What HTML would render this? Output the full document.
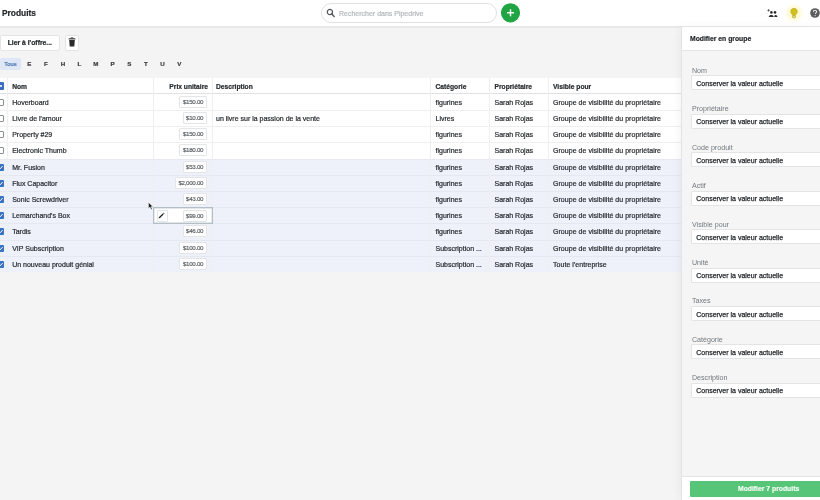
<!DOCTYPE html><html><head><meta charset="utf-8"><style>
*{box-sizing:border-box;margin:0;padding:0}
body{width:820px;height:500px;overflow:hidden;position:relative;background:#f4f4f4;font-family:"Liberation Sans",sans-serif;color:#26292c}
.a{position:absolute}
.t{position:absolute;white-space:nowrap;line-height:1;-webkit-text-stroke:.2px currentColor}
.row{position:absolute;left:0;width:681px}
.vl{position:absolute;top:78px;height:194px;width:1px;background:#eeeff0}
.cb{position:absolute;left:-3px;width:7px;height:7px;border-radius:1px}
.cb.off{border:1px solid #8a8f94;background:#fff}
.cb.on{background:#3b72c4}
.price{position:absolute;height:11.8px;border:1px solid #e3e5e7;background:#fff;border-radius:1px;font-size:6.2px;letter-spacing:-.3px;color:#55595d;text-align:right;padding-right:3.2px;line-height:9.9px;-webkit-text-stroke:.15px currentColor;white-space:nowrap}
.lbl{position:absolute;left:692px;font-size:7.1px;color:#73787d;white-space:nowrap;line-height:1}
.inp{position:absolute;left:691px;width:140px;height:15px;background:#fff;border:1px solid #e2e4e6;border-radius:1px}
.inp span{position:absolute;left:4.3px;top:3.6px;font-size:7px;color:#26292c;white-space:nowrap;line-height:1;-webkit-text-stroke:.25px currentColor}
</style></head><body><div id="root" style="position:absolute;left:0;top:0;width:820px;height:500px;will-change:transform;background:#f4f4f4">

<div class="a" style="left:0;top:0;width:820px;height:27px;background:#fff;border-bottom:1px solid #e8e8e8;box-shadow:0 1px 1px rgba(0,0,0,.04)"></div>
<div class="t" style="left:2px;top:9px;font-size:8.4px;font-weight:700;color:#26292c">Produits</div>
<div class="a" style="left:321px;top:3px;width:176px;height:19.5px;border:1px solid #dfe1e3;border-radius:10px;background:#fff"></div>
<svg class="a" style="left:326px;top:8px" width="10" height="10" viewBox="0 0 10 10"><circle cx="3.9" cy="4" r="2.6" fill="none" stroke="#505558" stroke-width="1.2"/><line x1="5.8" y1="6" x2="8.2" y2="8.4" stroke="#505558" stroke-width="1.4" stroke-linecap="round"/></svg>
<div class="t" style="left:339px;top:9.5px;font-size:7px;color:#b4b7ba">Rechercher dans Pipedrive</div>
<svg class="a" style="left:500px;top:3px" width="21" height="20" viewBox="0 0 21 20"><circle cx="10.5" cy="9.8" r="9.6" fill="#21a444"/><rect x="7" y="9.1" width="7" height="1.4" fill="#fff"/><rect x="9.8" y="6.3" width="1.4" height="7" fill="#fff"/></svg>

<svg class="a" style="left:766px;top:8px" width="14" height="10" viewBox="0 0 14 10"><path d="M2.6 1.2v2.4M1.4 2.4h2.4" stroke="#333" stroke-width=".7"/><circle cx="5.4" cy="4.4" r="1.3" fill="#2e2e2e"/><circle cx="9" cy="4.4" r="1.3" fill="#2e2e2e"/><path d="M2.7 8.9c.3-1.5 1.3-2 2.6-2s2.1.5 2.5 2zM8.3 8.9c.1-1.1.5-1.9 1.1-1.9 1 0 1.8.6 2.1 1.9z" fill="#2e2e2e"/></svg>
<div class="a" style="left:784px;top:3px;width:20px;height:20px;border-radius:50%;background:radial-gradient(circle,rgba(255,240,120,.6) 0%,rgba(255,245,160,.35) 45%,rgba(255,255,255,0) 70%)"></div>
<svg class="a" style="left:789px;top:7px" width="10" height="12" viewBox="0 0 10 12"><path d="M5 1.3c-1.9 0-3.3 1.4-3.3 3.2 0 1.2.7 2 1.2 2.6.3.4.5.8.5 1.2h3.2c0-.4.2-.8.5-1.2.5-.6 1.2-1.4 1.2-2.6C8.3 2.7 6.9 1.3 5 1.3z" fill="#d2c01c" stroke="#b3a224" stroke-width=".5"/><rect x="3.5" y="8.6" width="3" height="2.2" rx=".8" fill="#e2d67a" stroke="#a99a2a" stroke-width=".6"/></svg>
<svg class="a" style="left:810px;top:8px" width="10" height="10" viewBox="0 0 10 10"><circle cx="5" cy="5" r="4.8" fill="#5c5c5c"/><path d="M3.4 3.9c0-1 .7-1.6 1.6-1.6s1.6.6 1.6 1.5c0 1-1.3 1.1-1.3 2.1" fill="none" stroke="#e6e6e6" stroke-width="1.1"/><circle cx="5.2" cy="7.6" r=".65" fill="#e6e6e6"/></svg>

<div class="a" style="left:0;top:34.5px;width:60px;height:16px;background:#fff;border:1px solid #e2e4e6;border-radius:2px"></div>
<div class="t" style="left:7.7px;top:39.5px;font-size:6.8px;font-weight:700;color:#26292c">Lier à l'offre...</div>
<div class="a" style="left:65px;top:34.5px;width:14px;height:16px;background:#fff;border:1px solid #e2e4e6;border-radius:2px"></div>
<svg class="a" style="left:68px;top:37px" width="8" height="10" viewBox="0 0 8 10"><rect x=".6" y="1.3" width="6.8" height="1.1" fill="#2b2b2b"/><rect x="2.8" y=".5" width="2.4" height="1" fill="#2b2b2b"/><path d="M1.2 2.9h5.6l-.5 6.5H1.7z" fill="#2b2b2b"/></svg>
<div class="a" style="left:0;top:58px;width:21px;height:11.5px;background:#dde7f5;border-radius:2px"></div>
<div class="t" style="left:4.2px;top:62.2px;font-size:5.9px;color:#4570ad">Tous</div>

<div class="t" style="left:24.3px;width:10px;text-align:center;top:61.2px;font-size:6.2px;font-weight:700;color:#3a3e42">E</div>
<div class="t" style="left:40.9px;width:10px;text-align:center;top:61.2px;font-size:6.2px;font-weight:700;color:#3a3e42">F</div>
<div class="t" style="left:57.9px;width:10px;text-align:center;top:61.2px;font-size:6.2px;font-weight:700;color:#3a3e42">H</div>
<div class="t" style="left:74.4px;width:10px;text-align:center;top:61.2px;font-size:6.2px;font-weight:700;color:#3a3e42">L</div>
<div class="t" style="left:90.8px;width:10px;text-align:center;top:61.2px;font-size:6.2px;font-weight:700;color:#3a3e42">M</div>
<div class="t" style="left:107.5px;width:10px;text-align:center;top:61.2px;font-size:6.2px;font-weight:700;color:#3a3e42">P</div>
<div class="t" style="left:124.30000000000001px;width:10px;text-align:center;top:61.2px;font-size:6.2px;font-weight:700;color:#3a3e42">S</div>
<div class="t" style="left:140.9px;width:10px;text-align:center;top:61.2px;font-size:6.2px;font-weight:700;color:#3a3e42">T</div>
<div class="t" style="left:157.4px;width:10px;text-align:center;top:61.2px;font-size:6.2px;font-weight:700;color:#3a3e42">U</div>
<div class="t" style="left:174.3px;width:10px;text-align:center;top:61.2px;font-size:6.2px;font-weight:700;color:#3a3e42">V</div>
<div class="a" style="left:0;top:78px;width:681px;height:16px;background:#fff;border-bottom:1px solid #dfe1e3"></div>
<div class="row" style="top:94.00px;height:16.00px;background:#fff;"></div>
<div class="row" style="top:110.00px;height:16.00px;background:#fff;border-top:1px solid #efefef;"></div>
<div class="row" style="top:126.00px;height:16.00px;background:#fff;border-top:1px solid #efefef;"></div>
<div class="row" style="top:142.00px;height:17.00px;background:#fff;border-top:1px solid #efefef;"></div>
<div class="row" style="top:159.00px;height:16.00px;background:#eef1fa;border-top:1px solid #e5e8ef;"></div>
<div class="row" style="top:175.00px;height:16.00px;background:#eef1fa;border-top:1px solid #e5e8ef;"></div>
<div class="row" style="top:191.00px;height:16.00px;background:#eef1fa;border-top:1px solid #e5e8ef;"></div>
<div class="row" style="top:207.00px;height:16.00px;background:#eef1fa;border-top:1px solid #e5e8ef;"></div>
<div class="row" style="top:223.00px;height:17.00px;background:#eef1fa;border-top:1px solid #e5e8ef;"></div>
<div class="row" style="top:240.00px;height:16.00px;background:#eef1fa;border-top:1px solid #e5e8ef;"></div>
<div class="row" style="top:256.00px;height:16.00px;background:#eef1fa;border-top:1px solid #e5e8ef;"></div>
<div class="vl" style="left:7px"></div>
<div class="vl" style="left:153px"></div>
<div class="vl" style="left:212px"></div>
<div class="vl" style="left:430px"></div>
<div class="vl" style="left:489px"></div>
<div class="vl" style="left:548px"></div>
<div class="cb on" style="top:82px;height:8px;background:#3d6dc2"><div class="a" style="left:1.2px;top:3px;width:4.3px;height:2px;background:#cfe0f7"></div></div>
<div class="t" style="left:12.2px;top:84.3px;font-size:6.7px;font-weight:700">Nom</div>
<div class="t" style="right:612px;top:84.3px;font-size:6.7px;font-weight:700">Prix unitaire</div>
<div class="t" style="left:216px;top:84.3px;font-size:6.7px;font-weight:700">Description</div>
<div class="t" style="left:435.5px;top:84.3px;font-size:6.7px;font-weight:700">Catégorie</div>
<div class="t" style="left:494.5px;top:84.3px;font-size:6.7px;font-weight:700">Propriétaire</div>
<div class="t" style="left:553px;top:84.3px;font-size:6.7px;font-weight:700">Visible pour</div>
<div class="cb off" style="top:99.00px"></div>
<div class="t" style="left:12.2px;top:98.90px;font-size:7px">Hoverboard</div>
<div class="price" style="left:179.4px;width:28px;top:96.40px">$150.00</div>
<div class="t" style="left:435.5px;top:98.90px;font-size:7px">figurines</div>
<div class="t" style="left:494.5px;top:98.90px;font-size:7px">Sarah Rojas</div>
<div class="t" style="left:553px;top:98.90px;font-size:7px;letter-spacing:.04px">Groupe de visibilité du propriétaire</div>
<div class="cb off" style="top:115.00px"></div>
<div class="t" style="left:12.2px;top:114.90px;font-size:7px">Livre de l'amour</div>
<div class="price" style="left:182.6px;width:24.8px;top:112.40px">$10.00</div>
<div class="t" style="left:216px;top:114.90px;font-size:7px">un livre sur la passion de la vente</div>
<div class="t" style="left:435.5px;top:114.90px;font-size:7px">Livres</div>
<div class="t" style="left:494.5px;top:114.90px;font-size:7px">Sarah Rojas</div>
<div class="t" style="left:553px;top:114.90px;font-size:7px;letter-spacing:.04px">Groupe de visibilité du propriétaire</div>
<div class="cb off" style="top:131.00px"></div>
<div class="t" style="left:12.2px;top:130.90px;font-size:7px">Property #29</div>
<div class="price" style="left:179.4px;width:28px;top:128.40px">$150.00</div>
<div class="t" style="left:435.5px;top:130.90px;font-size:7px">figurines</div>
<div class="t" style="left:494.5px;top:130.90px;font-size:7px">Sarah Rojas</div>
<div class="t" style="left:553px;top:130.90px;font-size:7px;letter-spacing:.04px">Groupe de visibilité du propriétaire</div>
<div class="cb off" style="top:147.00px"></div>
<div class="t" style="left:12.2px;top:146.90px;font-size:7px">Electronic Thumb</div>
<div class="price" style="left:179.4px;width:28px;top:144.40px">$180.00</div>
<div class="t" style="left:435.5px;top:146.90px;font-size:7px">figurines</div>
<div class="t" style="left:494.5px;top:146.90px;font-size:7px">Sarah Rojas</div>
<div class="t" style="left:553px;top:146.90px;font-size:7px;letter-spacing:.04px">Groupe de visibilité du propriétaire</div>
<div class="cb on" style="top:163.60px"><svg class="a" style="left:0;top:0" width="7" height="7" viewBox="0 0 7 7"><path d="M1.6 3.6l1.4 1.3 2.6-2.8" fill="none" stroke="#fff" stroke-width="1"/></svg></div>
<div class="t" style="left:12.2px;top:163.90px;font-size:7px">Mr. Fusion</div>
<div class="price" style="left:182.6px;width:24.8px;top:161.40px">$53.00</div>
<div class="t" style="left:435.5px;top:163.90px;font-size:7px">figurines</div>
<div class="t" style="left:494.5px;top:163.90px;font-size:7px">Sarah Rojas</div>
<div class="t" style="left:553px;top:163.90px;font-size:7px;letter-spacing:.04px">Groupe de visibilité du propriétaire</div>
<div class="cb on" style="top:179.60px"><svg class="a" style="left:0;top:0" width="7" height="7" viewBox="0 0 7 7"><path d="M1.6 3.6l1.4 1.3 2.6-2.8" fill="none" stroke="#fff" stroke-width="1"/></svg></div>
<div class="t" style="left:12.2px;top:179.90px;font-size:7px">Flux Capacitor</div>
<div class="price" style="left:174.8px;width:32.6px;top:177.40px">$2,000.00</div>
<div class="t" style="left:435.5px;top:179.90px;font-size:7px">figurines</div>
<div class="t" style="left:494.5px;top:179.90px;font-size:7px">Sarah Rojas</div>
<div class="t" style="left:553px;top:179.90px;font-size:7px;letter-spacing:.04px">Groupe de visibilité du propriétaire</div>
<div class="cb on" style="top:195.60px"><svg class="a" style="left:0;top:0" width="7" height="7" viewBox="0 0 7 7"><path d="M1.6 3.6l1.4 1.3 2.6-2.8" fill="none" stroke="#fff" stroke-width="1"/></svg></div>
<div class="t" style="left:12.2px;top:195.90px;font-size:7px">Sonic Screwdriver</div>
<div class="price" style="left:182.6px;width:24.8px;top:193.40px">$43.00</div>
<div class="t" style="left:435.5px;top:195.90px;font-size:7px">figurines</div>
<div class="t" style="left:494.5px;top:195.90px;font-size:7px">Sarah Rojas</div>
<div class="t" style="left:553px;top:195.90px;font-size:7px;letter-spacing:.04px">Groupe de visibilité du propriétaire</div>
<div class="cb on" style="top:211.60px"><svg class="a" style="left:0;top:0" width="7" height="7" viewBox="0 0 7 7"><path d="M1.6 3.6l1.4 1.3 2.6-2.8" fill="none" stroke="#fff" stroke-width="1"/></svg></div>
<div class="t" style="left:12.2px;top:211.90px;font-size:7px">Lemarchand's Box</div>
<div class="price" style="left:182.6px;width:24.8px;top:209.40px">$99.00</div>
<div class="t" style="left:435.5px;top:211.90px;font-size:7px">figurines</div>
<div class="t" style="left:494.5px;top:211.90px;font-size:7px">Sarah Rojas</div>
<div class="t" style="left:553px;top:211.90px;font-size:7px;letter-spacing:.04px">Groupe de visibilité du propriétaire</div>
<div class="cb on" style="top:227.60px"><svg class="a" style="left:0;top:0" width="7" height="7" viewBox="0 0 7 7"><path d="M1.6 3.6l1.4 1.3 2.6-2.8" fill="none" stroke="#fff" stroke-width="1"/></svg></div>
<div class="t" style="left:12.2px;top:227.90px;font-size:7px">Tardis</div>
<div class="price" style="left:182.6px;width:24.8px;top:225.40px">$46.00</div>
<div class="t" style="left:435.5px;top:227.90px;font-size:7px">figurines</div>
<div class="t" style="left:494.5px;top:227.90px;font-size:7px">Sarah Rojas</div>
<div class="t" style="left:553px;top:227.90px;font-size:7px;letter-spacing:.04px">Groupe de visibilité du propriétaire</div>
<div class="cb on" style="top:244.60px"><svg class="a" style="left:0;top:0" width="7" height="7" viewBox="0 0 7 7"><path d="M1.6 3.6l1.4 1.3 2.6-2.8" fill="none" stroke="#fff" stroke-width="1"/></svg></div>
<div class="t" style="left:12.2px;top:244.90px;font-size:7px">VIP Subscription</div>
<div class="price" style="left:179.4px;width:28px;top:242.40px">$100.00</div>
<div class="t" style="left:435.5px;top:244.90px;font-size:7px">Subscription ...</div>
<div class="t" style="left:494.5px;top:244.90px;font-size:7px">Sarah Rojas</div>
<div class="t" style="left:553px;top:244.90px;font-size:7px;letter-spacing:.04px">Groupe de visibilité du propriétaire</div>
<div class="cb on" style="top:260.60px"><svg class="a" style="left:0;top:0" width="7" height="7" viewBox="0 0 7 7"><path d="M1.6 3.6l1.4 1.3 2.6-2.8" fill="none" stroke="#fff" stroke-width="1"/></svg></div>
<div class="t" style="left:12.2px;top:260.90px;font-size:7px">Un nouveau produit génial</div>
<div class="price" style="left:179.4px;width:28px;top:258.40px">$100.00</div>
<div class="t" style="left:435.5px;top:260.90px;font-size:7px">Subscription ...</div>
<div class="t" style="left:494.5px;top:260.90px;font-size:7px">Sarah Rojas</div>
<div class="t" style="left:553px;top:260.90px;font-size:7px;letter-spacing:.04px">Toute l'entreprise</div>
<div class="a" style="left:153px;top:207.30px;width:59.5px;height:16.40px;background:#fff;border:1px solid #b3bec6;box-shadow:inset 0 0 0 .4px #c8d0d6"></div>
<div class="a" style="left:156.5px;top:209.60px;width:11px;height:12.4px;background:#fff;border:1px solid #e3e5e7;border-radius:1px"></div>
<svg class="a" style="left:157px;top:210.80px" width="9" height="9" viewBox="0 0 9 9"><path d="M1.6 7.4l.5-1.3 3.6-3.5.9.9L3 7z" fill="#1e1e1e"/><path d="M6.1 2.2l.6-.6.9.9-.6.6z" fill="#333"/></svg>
<div class="price" style="left:182.6px;width:24.8px;top:209.60px;height:12.4px;line-height:10.3px">$99.00</div>
<svg class="a" style="left:147.5px;top:201.5px" width="6" height="8" viewBox="0 0 6 8"><path d="M.5.5v6l1.5-1.4 1.2 2.4 1-.5-1.2-2.3h2z" fill="#222" stroke="#fff" stroke-width=".4"/></svg>
<div class="a" style="left:681px;top:27px;width:139px;height:473px;background:#f5f5f5;border-left:1px solid #e4e4e4;box-shadow:-2px 0 8px rgba(0,0,0,.045)"></div>
<div class="a" style="left:682px;top:27px;width:138px;height:23.5px;background:#fff;border-bottom:1px solid #e4e4e4"></div>
<div class="t" style="left:690px;top:36px;font-size:6.8px;font-weight:700;color:#26292c">Modifier en groupe</div>

<div class="lbl" style="top:67.70px">Nom</div>
<div class="inp" style="top:75.30px"><span>Conserver la valeur actuelle</span></div>
<div class="lbl" style="top:106.15px">Propriétaire</div>
<div class="inp" style="top:113.75px"><span>Conserver la valeur actuelle</span></div>
<div class="lbl" style="top:144.60px">Code produit</div>
<div class="inp" style="top:152.20px"><span>Conserver la valeur actuelle</span></div>
<div class="lbl" style="top:183.05px">Actif</div>
<div class="inp" style="top:190.65px"><span>Conserver la valeur actuelle</span></div>
<div class="lbl" style="top:221.50px">Visible pour</div>
<div class="inp" style="top:229.10px"><span>Conserver la valeur actuelle</span></div>
<div class="lbl" style="top:259.95px">Unité</div>
<div class="inp" style="top:267.55px"><span>Conserver la valeur actuelle</span></div>
<div class="lbl" style="top:298.40px">Taxes</div>
<div class="inp" style="top:306.00px"><span>Conserver la valeur actuelle</span></div>
<div class="lbl" style="top:336.85px">Catégorie</div>
<div class="inp" style="top:344.45px"><span>Conserver la valeur actuelle</span></div>
<div class="lbl" style="top:375.30px">Description</div>
<div class="inp" style="top:382.90px"><span>Conserver la valeur actuelle</span></div>
<div class="a" style="left:682px;top:475.5px;width:138px;height:25px;background:#fff;border-top:1px solid #e4e4e4"></div>
<div class="a" style="left:689.5px;top:481px;width:150px;height:16px;background:#56c578;border-radius:1px"></div>
<div class="t" style="left:738px;top:486.2px;font-size:6.8px;font-weight:700;color:#f2fbf4">Modifier 7 produits</div>

</div></body></html>
